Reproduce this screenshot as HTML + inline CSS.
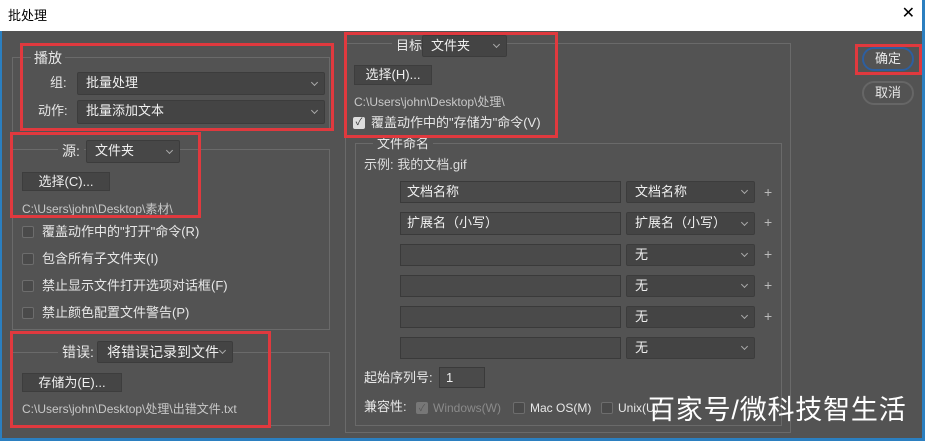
<!DOCTYPE html>
<html><head><meta charset="utf-8"><style>
*{margin:0;padding:0;box-sizing:border-box}
body{width:925px;height:441px;overflow:hidden;background:#535353;font-family:"Liberation Sans","Noto Sans CJK SC",sans-serif;font-size:13px;line-height:16px;color:#e8e8e8;position:relative}
.a{position:absolute;white-space:nowrap}
.title{left:0;top:0;width:925px;height:31px;background:#fff;color:#000;font-size:13px;padding:8px 0 0 8px;border-right:3px solid #2b7fc0}
.grp{position:absolute;border:1px solid #6a6a6a}
.red{position:absolute;border:3px solid #e0393e}
.sel{position:absolute;background:#444;border:1px solid #3c3c3c;border-radius:2px;color:#f0f0f0;padding-left:8px;line-height:20px;white-space:nowrap}
.sel:after{content:"";position:absolute;right:7px;top:50%;width:4px;height:4px;margin-top:-4px;border-right:1px solid #aaa;border-bottom:1px solid #aaa;transform:rotate(45deg)}
.inp{position:absolute;background:#4a4a4a;border:1px solid #3a3a3a;color:#f0f0f0;padding-left:6px;line-height:20px}
.btn{position:absolute;background:#454545;border:1px solid #3d3d3d;text-align:center;line-height:17px;color:#eee}
.cb{position:absolute;width:12px;height:12px;border:1px solid #6d6d6d;background:#4a4a4a;border-radius:2px}
.path{color:#c8c8c8;font-size:12px}
.plus{position:absolute;color:#bbb;font-size:14px}
.pill{position:absolute;border:2px solid #666;border-radius:12px;text-align:center;line-height:19px;width:52px;height:24px}
</style></head><body>
<div class="a title">批处理</div>
<div class="a" style="right:10px;top:6px;color:#000;font-size:16px">✕</div>
<div class="a" style="left:0;top:31px;width:2px;height:410px;background:#2b7fc0"></div>
<div class="a" style="left:0;top:438px;width:925px;height:3px;background:#2b7fc0"></div>
<div class="a" style="left:922px;top:31px;width:3px;height:410px;background:#2b7fc0"></div>

<div class="grp" style="left:12px;top:57px;width:318px;height:74px;border-bottom:none"></div>
<div class="a" style="left:31px;top:50px;background:#535353;padding:0 3px;font-size:14px">播放</div>
<div class="a" style="left:50px;top:75px">组:</div>
<div class="sel" style="left:77px;top:72px;width:248px;height:23px">批量处理</div>
<div class="a" style="left:38px;top:103px">动作:</div>
<div class="sel" style="left:77px;top:100px;width:248px;height:24px">批量添加文本</div>

<div class="grp" style="left:12px;top:149px;width:318px;height:181px"></div>
<div class="a" style="left:58px;top:143px;background:#535353;padding:0 4px;font-size:14px">源:</div>
<div class="sel" style="left:86px;top:140px;width:94px;height:23px;background:#474747">文件夹</div>
<div class="btn" style="left:22px;top:172px;width:88px;height:19px">选择(C)...</div>
<div class="a path" style="left:22px;top:201px">C:\Users\john\Desktop\素材\</div>
<div class="cb" style="left:22px;top:226px"></div><div class="a" style="left:42px;top:224px">覆盖动作中的"打开"命令(R)</div>
<div class="cb" style="left:22px;top:253px"></div><div class="a" style="left:42px;top:251px">包含所有子文件夹(I)</div>
<div class="cb" style="left:22px;top:280px"></div><div class="a" style="left:42px;top:278px">禁止显示文件打开选项对话框(F)</div>
<div class="cb" style="left:22px;top:307px"></div><div class="a" style="left:42px;top:305px">禁止颜色配置文件警告(P)</div>

<div class="grp" style="left:12px;top:352px;width:318px;height:74px"></div>
<div class="a" style="left:58px;top:344px;background:#535353;padding:0 4px;font-size:14px">错误:</div>
<div class="sel" style="left:97px;top:341px;width:136px;height:22px;font-size:14px;padding-left:9px">将错误记录到文件</div>
<div class="btn" style="left:22px;top:373px;width:100px;height:19px">存储为(E)...</div>
<div class="a path" style="left:22px;top:401px">C:\Users\john\Desktop\处理\出错文件.txt</div>

<div class="grp" style="left:345px;top:43px;width:446px;height:390px"></div>
<div class="a" style="left:392px;top:38px;background:#535353;padding:0 4px">目标:</div>
<div class="sel" style="left:422px;top:35px;width:85px;height:22px">文件夹</div>
<div class="btn" style="left:354px;top:65px;width:78px;height:20px">选择(H)...</div>
<div class="a path" style="left:354px;top:94px">C:\Users\john\Desktop\处理\</div>
<div style="position:absolute;left:353px;top:117px;width:12px;height:12px;background:#ddd;border-radius:2px;color:#333;font-size:10px;line-height:12px;text-align:center">✓</div>
<div class="a" style="left:371px;top:115px">覆盖动作中的"存储为"命令(V)</div>

<div class="grp" style="left:355px;top:143px;width:427px;height:283px"></div>
<div class="a" style="left:373px;top:136px;background:#535353;padding:0 4px">文件命名</div>
<div class="a" style="left:364px;top:157px;color:#ddd">示例: 我的文档.gif</div>

<div class="inp" style="left:400px;top:181px;width:221px;height:22px">文档名称</div>
<div class="sel" style="left:626px;top:181px;width:129px;height:22px">文档名称</div><div class="plus" style="left:764px;top:184px">+</div>
<div class="inp" style="left:400px;top:212px;width:221px;height:23px">扩展名（小写）</div>
<div class="sel" style="left:626px;top:212px;width:129px;height:23px">扩展名（小写）</div><div class="plus" style="left:764px;top:214px">+</div>
<div class="inp" style="left:400px;top:244px;width:221px;height:22px"></div>
<div class="sel" style="left:626px;top:244px;width:129px;height:22px">无</div><div class="plus" style="left:764px;top:246px">+</div>
<div class="inp" style="left:400px;top:275px;width:221px;height:22px"></div>
<div class="sel" style="left:626px;top:275px;width:129px;height:22px">无</div><div class="plus" style="left:764px;top:277px">+</div>
<div class="inp" style="left:400px;top:306px;width:221px;height:22px"></div>
<div class="sel" style="left:626px;top:306px;width:129px;height:22px">无</div><div class="plus" style="left:764px;top:308px">+</div>
<div class="inp" style="left:400px;top:337px;width:221px;height:22px"></div>
<div class="sel" style="left:626px;top:337px;width:129px;height:22px">无</div>

<div class="a" style="left:364px;top:370px">起始序列号:</div>
<div class="inp" style="left:439px;top:367px;width:46px;height:21px">1</div>
<div class="a" style="left:364px;top:399px">兼容性:</div>
<div style="position:absolute;left:416px;top:402px;width:12px;height:12px;background:#777;border-radius:2px;color:#555;font-size:9px;line-height:12px;text-align:center">✓</div>
<div class="a" style="left:433px;top:400px;color:#8a8a8a;font-size:12px">Windows(W)</div>
<div class="cb" style="left:513px;top:402px"></div><div class="a" style="left:530px;top:400px;font-size:12px">Mac OS(M)</div>
<div class="cb" style="left:601px;top:402px"></div><div class="a" style="left:618px;top:400px;font-size:12px">Unix(U)</div>

<div class="pill" style="left:862px;top:47px;border-color:#2d5fa0">确定</div>
<div class="pill" style="left:862px;top:81px">取消</div>

<div class="red" style="left:20px;top:43px;width:314px;height:88px"></div>
<div class="red" style="left:10px;top:132px;width:191px;height:86px"></div>
<div class="red" style="left:10px;top:331px;width:261px;height:97px"></div>
<div class="red" style="left:344px;top:32px;width:214px;height:106px"></div>
<div class="red" style="left:855px;top:44px;width:67px;height:31px"></div>

<div class="a" style="left:648px;top:394px;font-size:27px;line-height:32px;color:#fff;letter-spacing:0.8px">百家号/微科技智生活</div>
</body></html>
